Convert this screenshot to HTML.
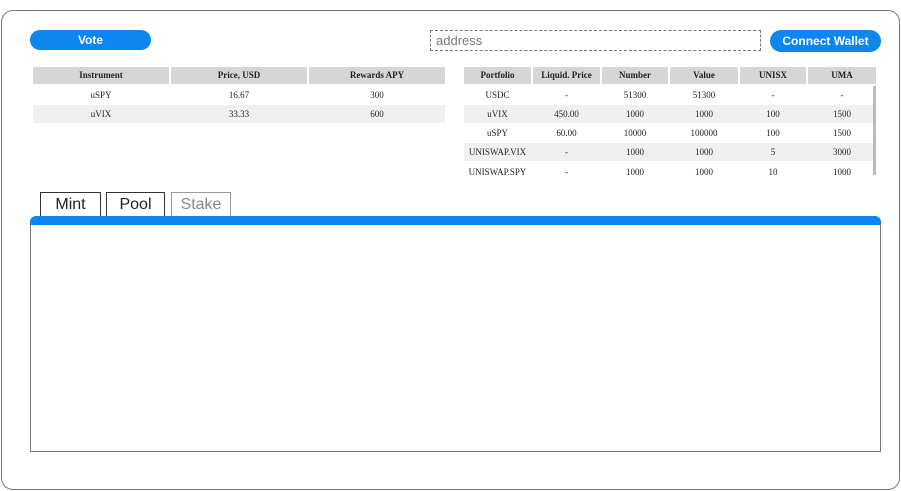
<!DOCTYPE html>
<html><head><meta charset="utf-8"><style>
*{box-sizing:border-box;margin:0;padding:0}
body{width:901px;height:491px;background:#fff;position:relative;overflow:hidden;font-family:"Liberation Sans",sans-serif}
.a{position:absolute}
.outer{left:1px;top:10px;width:899px;height:480px;border:1px solid #777;border-radius:12px}
.btn{background:#0d86f0;color:#fff;font-weight:bold;border-radius:11px;text-align:center;font-size:12px}
.cell{position:absolute;font-family:"Liberation Serif",serif;font-size:9px;color:#222;text-align:center;line-height:18px}
.hd{background:#d6d6d6;font-weight:bold;height:17px;line-height:17px;top:67px}
.row{position:absolute;background:#f0f0f0;height:18px}
.tab{position:absolute;top:192px;height:25px;border:1px solid #333;font-size:16px;text-align:center;line-height:23px;color:#222;background:#fff}
</style></head><body>
<div class="a outer"></div>
<div class="a btn" style="left:30px;top:30px;width:121px;height:20px;line-height:20px">Vote</div>
<div class="a" style="left:430px;top:30px;width:331px;height:21px;border:1px dashed #777;font-size:13px;color:#777;padding-left:5px;line-height:19px">address</div>
<div class="a btn" style="left:770px;top:30px;width:111px;height:22px;line-height:22px">Connect Wallet</div>

<div class="row" style="left:33px;top:105px;width:412px"></div>
<div class="cell hd" style="left:33px;width:136px">Instrument</div>
<div class="cell hd" style="left:171px;width:136px">Price, USD</div>
<div class="cell hd" style="left:309px;width:136px">Rewards APY</div>
<div class="cell" style="left:33px;width:136px;top:86px">uSPY</div>
<div class="cell" style="left:171px;width:136px;top:86px">16.67</div>
<div class="cell" style="left:309px;width:136px;top:86px">300</div>
<div class="cell" style="left:33px;width:136px;top:105px">uVIX</div>
<div class="cell" style="left:171px;width:136px;top:105px">33.33</div>
<div class="cell" style="left:309px;width:136px;top:105px">600</div>

<div class="a" style="left:464px;top:86px;width:412px;height:89px;overflow:hidden">
<div class="row" style="left:0;top:19px;width:412px"></div>
<div class="row" style="left:0;top:57px;width:412px"></div>
<div class="a" style="left:409px;top:0;width:3px;height:89px;background:#bbb"></div>
</div>
<div class="cell hd" style="left:464px;width:67px">Portfolio</div>
<div class="cell hd" style="left:533px;width:67px">Liquid. Price</div>
<div class="cell hd" style="left:602px;width:66px">Number</div>
<div class="cell hd" style="left:670px;width:68px">Value</div>
<div class="cell hd" style="left:740px;width:66px">UNISX</div>
<div class="cell hd" style="left:808px;width:68px">UMA</div>
<div class="a" style="left:464px;top:86px;width:412px;height:89px;overflow:hidden">
<div class="cell" style="left:0;width:67px;top:0">USDC</div><div class="cell" style="left:69px;width:67px;top:0">-</div><div class="cell" style="left:138px;width:66px;top:0">51300</div><div class="cell" style="left:206px;width:68px;top:0">51300</div><div class="cell" style="left:276px;width:66px;top:0">-</div><div class="cell" style="left:344px;width:68px;top:0">-</div>
<div class="cell" style="left:0;width:67px;top:19px">uVIX</div><div class="cell" style="left:69px;width:67px;top:19px">450.00</div><div class="cell" style="left:138px;width:66px;top:19px">1000</div><div class="cell" style="left:206px;width:68px;top:19px">1000</div><div class="cell" style="left:276px;width:66px;top:19px">100</div><div class="cell" style="left:344px;width:68px;top:19px">1500</div>
<div class="cell" style="left:0;width:67px;top:38px">uSPY</div><div class="cell" style="left:69px;width:67px;top:38px">60.00</div><div class="cell" style="left:138px;width:66px;top:38px">10000</div><div class="cell" style="left:206px;width:68px;top:38px">100000</div><div class="cell" style="left:276px;width:66px;top:38px">100</div><div class="cell" style="left:344px;width:68px;top:38px">1500</div>
<div class="cell" style="left:0;width:67px;top:57px">UNISWAP.VIX</div><div class="cell" style="left:69px;width:67px;top:57px">-</div><div class="cell" style="left:138px;width:66px;top:57px">1000</div><div class="cell" style="left:206px;width:68px;top:57px">1000</div><div class="cell" style="left:276px;width:66px;top:57px">5</div><div class="cell" style="left:344px;width:68px;top:57px">3000</div>
<div class="cell" style="left:0;width:67px;top:77px">UNISWAP.SPY</div><div class="cell" style="left:69px;width:67px;top:77px">-</div><div class="cell" style="left:138px;width:66px;top:77px">1000</div><div class="cell" style="left:206px;width:68px;top:77px">1000</div><div class="cell" style="left:276px;width:66px;top:77px">10</div><div class="cell" style="left:344px;width:68px;top:77px">1000</div>
</div>

<div class="tab" style="left:40px;width:61px">Mint</div>
<div class="tab" style="left:106px;width:59px">Pool</div>
<div class="tab" style="left:171px;width:60px;color:#888;border-color:#999">Stake</div>
<div class="a" style="left:30px;top:216px;width:851px;height:9px;background:#0d86f0;border-radius:6px 6px 0 0"></div>
<div class="a" style="left:30px;top:224px;width:851px;height:228px;border:1px solid #777;border-top:none"></div>
</body></html>
